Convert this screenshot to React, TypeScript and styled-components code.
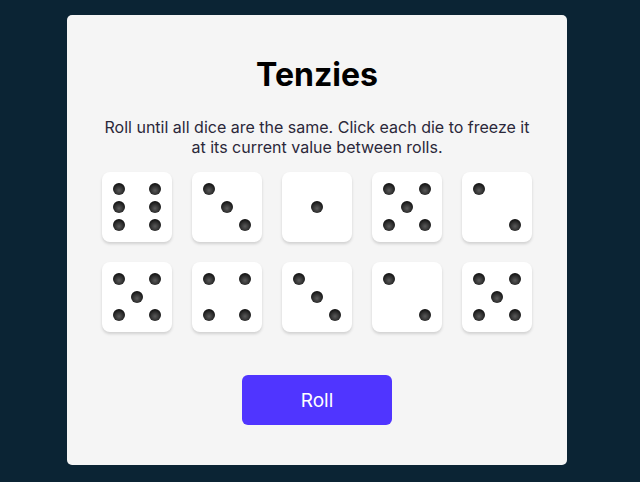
import React from "react";
import styled, { createGlobalStyle } from "styled-components";

const GlobalStyle = createGlobalStyle`
  html, body { margin: 0; padding: 0; background: #0B2434; }
  body { font-family: Inter, "Noto Sans", sans-serif; }
  * { box-sizing: border-box; }
`;

const Page = styled.div`
  display: flex;
  padding: 15px 73px 17px 67px;
  min-height: 482px;
`;

const Board = styled.main`
  width: 500px;
  height: 450px;
  background: #F5F5F5;
  border-radius: 5px;
  display: flex;
  flex-direction: column;
  align-items: center;
`;

const Title = styled.h1`
  margin: 40px 0 0;
  font-size: 32px;
  line-height: 39px;
  font-weight: 700;
  color: #000;
`;

const Instructions = styled.p`
  margin: 24px 0 0;
  width: 440px;
  font-size: 16px;
  line-height: 19.5px;
  text-align: center;
  color: #2B283A;
`;

const DiceGrid = styled.div`
  margin-top: 15px;
  display: grid;
  grid-template-columns: repeat(5, 70px);
  grid-auto-rows: 70px;
  gap: 20px;
`;

const Die = styled.button`
  all: unset;
  box-sizing: border-box;
  width: 70px;
  height: 70px;
  background: #fff;
  border-radius: 8px;
  box-shadow: 0 2px 3px rgba(0, 0, 0, 0.15);
  display: grid;
  grid-template-columns: repeat(3, 12px);
  grid-template-rows: repeat(3, 12px);
  gap: 6px;
  padding: 11px;
  cursor: pointer;
`;

const Pip = styled.span<{ $col: number; $row: number }>`
  grid-column: ${(p) => p.$col};
  grid-row: ${(p) => p.$row};
  width: 12px;
  height: 12px;
  border-radius: 50%;
  background: radial-gradient(circle at 50% 62%, #5a5a5a 0%, #333 40%, #0d0d0d 78%);
`;

const RollButton = styled.button`
  margin-top: 43px;
  width: 150px;
  height: 50px;
  border: none;
  border-radius: 6px;
  background: #5035FF;
  color: #fff;
  font-family: Inter, "Noto Sans", sans-serif;
  font-size: 19px;
  cursor: pointer;
`;

const layouts: Record<number, [number, number][]> = {
  1: [[2, 2]],
  2: [[1, 1], [3, 3]],
  3: [[1, 1], [2, 2], [3, 3]],
  4: [[1, 1], [3, 1], [1, 3], [3, 3]],
  5: [[1, 1], [3, 1], [2, 2], [1, 3], [3, 3]],
  6: [[1, 1], [3, 1], [1, 2], [3, 2], [1, 3], [3, 3]],
};

const values = [6, 3, 1, 5, 2, 5, 4, 3, 2, 5];

export default function App() {
  return (
    <>
      <GlobalStyle />
      <Page>
        <Board>
          <Title>Tenzies</Title>
          <Instructions>
            Roll until all dice are the same. Click each die to freeze it at its current value between rolls.
          </Instructions>
          <DiceGrid>
            {values.map((v, i) => (
              <Die key={i} aria-label={`Die with value ${v}`}>
                {layouts[v].map(([c, r], j) => (
                  <Pip key={j} $col={c} $row={r} />
                ))}
              </Die>
            ))}
          </DiceGrid>
          <RollButton>Roll</RollButton>
        </Board>
      </Page>
    </>
  );
}
